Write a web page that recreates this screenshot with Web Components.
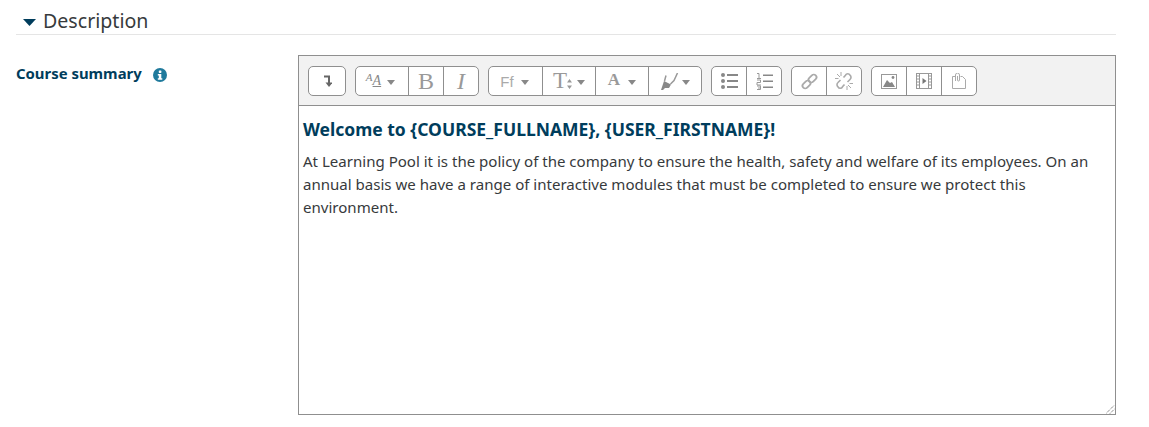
<!DOCTYPE html>
<html lang="en"><head><meta charset="utf-8"><title>Description</title>
<style>
html,body{margin:0;padding:0;background:#fff}
body{font-family:"Noto Sans","Open Sans",sans-serif;color:#373a3c}
</style></head><body>
<course-form>
  <section-head>Description</section-head>
  <form-row>
    <span slot="label">Course summary</span>
    <rich-editor>
      <atto-toolbar slot="toolbar">
        <atto-group>
          <atto-btn w="36"><svg width="9" height="12" viewBox="0 0 9 12"><path d="M1 1.500h5v7" fill="none" stroke="#666" stroke-width="2"/><path d="M2.500 7.500h7L6 12z" fill="#666"/></svg></atto-btn>
        </atto-group>
        <atto-group>
          <atto-btn w="53"><span style="font:italic 11px 'Liberation Serif',serif;color:#888;display:inline-flex;align-items:flex-end;line-height:1;margin:0 6px 0 -3px"><span style="position:relative;top:-5px">A</span><span style="text-decoration:underline;font-size:14px">A</span></span><drop-caret></drop-caret></atto-btn>
          <atto-btn w="35"><span style="font:24px 'Liberation Serif',serif;color:#999">B</span></atto-btn>
          <atto-btn w="34"><span style="font:italic 24px 'Liberation Serif',serif;color:#999">I</span></atto-btn>
        </atto-group>
        <atto-group>
          <atto-btn w="54"><span style="font:15px 'Liberation Sans',sans-serif;color:#aaa;margin:0 7px 0 -2px">Ff</span><drop-caret></drop-caret></atto-btn>
          <atto-btn w="53"><span style="font:23px 'Liberation Serif',serif;color:#999">T</span><svg width="5" height="12" viewBox="0 0 5 12" style="margin:6px 5px 0 0"><path d="M2.500 1 5 4.500H0zM2.500 11 0 7.500h5z" fill="#999"/></svg><drop-caret></drop-caret></atto-btn>
          <atto-btn w="53"><span style="font:bold 17px 'Liberation Serif',serif;color:#999;margin:-2px 8px 0 0">A</span><drop-caret></drop-caret></atto-btn>
          <atto-btn w="52"><svg width="18" height="17" viewBox="0 0 18 17" style="margin-right:3px"><path d="M3 8l7 3.500-2 3.500H4l-2 2H0l1-3z" fill="#888"/><path d="M3.500 8 5 2.500M9.500 11 13 7.500 16.500 0" fill="none" stroke="#999" stroke-width="1.500"/></svg><drop-caret></drop-caret></atto-btn>
        </atto-group>
        <atto-group>
          <atto-btn w="35"><svg width="17" height="16" viewBox="0 0 17 16" fill="#888"><circle cx="2" cy="2" r="2"/><circle cx="2" cy="8" r="2"/><circle cx="2" cy="14" r="2"/><path d="M6 1h11v2H6zM6 7h11v2H6zM6 13h11v2H6z"/></svg></atto-btn>
          <atto-btn w="34"><svg width="17" height="17" viewBox="0 0 17 17"><path d="M1 .500h2V5M1 5.500h4M1 7h3.500v2.500H1V12h4M1 13h3.500v3.500H1M2 15h2.500" fill="none" stroke="#999" stroke-width="1"/><path d="M7 1.500h10v1.500H7zM7 7.500h10V9H7zM7 13.500h10V15H7z" fill="#888"/></svg></atto-btn>
        </atto-group>
        <atto-group>
          <atto-btn w="35"><svg width="17" height="17" viewBox="0 0 17 17" fill="none" stroke="#aaa" stroke-width="1.800"><rect x="-4.500" y="-2.700" width="9" height="5.400" rx="2.700" transform="translate(5.500 11.500) rotate(-45)"/><rect x="-4.500" y="-2.700" width="9" height="5.400" rx="2.700" transform="translate(11.500 5.500) rotate(-45)"/></svg></atto-btn>
          <atto-btn w="34"><svg width="18" height="18" viewBox="0 0 18 18" fill="none" stroke="#aaa" stroke-width="1.600"><path d="M8.500 5.500l2-2.300a2.500 2.500 0 0 1 4.500 0 2.800 2.800 0 0 1 0 4.300L12.500 10M9.500 12.500l-2 2.300a2.500 2.500 0 0 1-4.500 0 2.800 2.800 0 0 1 0-4.300L5.500 8"/><path d="M6 0v4M2 2l3 3M0 6.500h3.500M12 18v-4M16 16l-3-3M18 11.500h-3.500" stroke-width="1"/></svg></atto-btn>
        </atto-group>
        <atto-group>
          <atto-btn w="35"><svg width="16" height="15" viewBox="0 0 16 15"><rect x=".5" y=".5" width="15" height="14" fill="none" stroke="#999"/><path d="M2 13l4-7 3 3 2-1 3 5z" fill="#888"/><circle cx="12" cy="3.500" r="1.400" fill="#888"/></svg></atto-btn>
          <atto-btn w="35"><svg width="16" height="16" viewBox="0 0 16 16"><rect x=".5" y=".5" width="15" height="15" fill="none" stroke="#999"/><path d="M3.500 0v16M12.500 0v16" stroke="#999"/><path d="M.5 3h3M.5 6h3M.5 9h3M.5 12h3M12.500 3h3M12.500 6h3M12.500 9h3M12.500 12h3" stroke="#999" stroke-width="1.200"/><path d="M6.500 5l4 3-4 3z" fill="#777"/></svg></atto-btn>
          <atto-btn w="34"><svg width="14" height="16" viewBox="0 0 14 16" fill="none" stroke="#aaa"><path d="M3 3.500H.5v12h13V6.500l-3-3H8.500"/><path d="M3.500 8V2a2 2 0 0 1 4 0v5a1 1 0 0 1-2 0V3"/></svg></atto-btn>
        </atto-group>
      </atto-toolbar>
      <h3 style="margin:0 0 9px;font:700 17.500px/24px 'Noto Sans',sans-serif;color:#003d5c">Welcome to {COURSE_FULLNAME}, {USER_FIRSTNAME}!</h3>
      <p style="margin:0;font:15.050px/23px 'Noto Sans',sans-serif;color:#373a3c">At Learning Pool it is the policy of the company to ensure the health, safety and welfare of its employees. On an annual basis we have a range of interactive modules that must be completed to ensure we protect this environment.</p>
    </rich-editor>
  </form-row>
</course-form>
<script>
function def(name, css, html){
  customElements.define(name, class extends HTMLElement{
    constructor(){super();const r=this.attachShadow({mode:'open'});r.innerHTML='<style>'+css+'</style>'+html;}
    connectedCallback(){const w=this.getAttribute('w');if(w)this.style.width=w+'px';}
  });
}
def('course-form',':host{display:block;padding:7px 33px 12px 16px;box-sizing:border-box;width:1149px}','<slot></slot>');
def('section-head',':host{display:flex;align-items:center;height:27px;border-bottom:1px solid #e5e5e5;font:19.600px/27px "Noto Sans",sans-serif;color:#373a3c;margin-bottom:20px}svg{margin:3px 7px 0 7px}','<svg width="13" height="7" viewBox="0 0 13 7"><path d="M0 0h13L6.500 7z" fill="#003d5c"/></svg><slot></slot>');
def('form-row',':host{display:flex}.l{width:282px;flex:none;display:flex;align-items:flex-start;gap:11px;font:700 14.900px/20px "Noto Sans",sans-serif;color:#003d5c;padding-top:8px;box-sizing:border-box}svg{margin-top:5px}.e{flex:1;min-width:0}','<div class="l"><slot name="label"></slot><svg width="14" height="14" viewBox="0 0 14 14"><circle cx="7" cy="7" r="7" fill="#1f7a9c"/><rect x="5.800" y="2.500" width="2.600" height="2.400" rx=".6" fill="#fff"/><path d="M4.800 6h3.500v4.200h1v1.500H4.800v-1.500h1V7.500h-1z" fill="#fff"/></svg></div><div class="e"><slot></slot></div>');
customElements.define('rich-editor', class extends HTMLElement{
  constructor(){super();this.attachShadow({mode:'open'}).innerHTML='<style>:host{display:block;height:360px;box-sizing:border-box;border:1px solid #8f8f8f;position:relative;background:#fff}.c{padding:11px 4px 0 4px}svg{position:absolute;right:0;bottom:0}</style><slot name="toolbar"></slot><div class="c"><slot></slot></div><svg width="9" height="9" viewBox="0 0 9 9" stroke="#555" stroke-dasharray="1 1"><path d="M0 8.500 8.500 0M4 8.500 8.500 4"/></svg>';}
});
def('atto-toolbar',':host{display:flex;gap:9px;height:50px;box-sizing:border-box;background:#f2f2f2;border-bottom:1px solid #8f8f8f;padding:10px 0 0 9px;align-items:flex-start}','<slot></slot>');
def('atto-group',':host{display:flex;height:30px;box-sizing:border-box;border:1px solid #8f8f8f;border-radius:5px;background:#fff;overflow:hidden}::slotted(atto-btn:not(:last-child)){border-right:1px solid #8f8f8f}','<slot></slot>');
def('atto-btn',':host{display:flex;align-items:center;justify-content:center;box-sizing:border-box;flex:none;height:100%;line-height:1}','<slot></slot>');
def('drop-caret',':host{display:inline-block;width:0;height:0;border-left:4.500px solid transparent;border-right:4.500px solid transparent;border-top:5px solid #888;margin-top:3px}','');
</script>
</body></html>
